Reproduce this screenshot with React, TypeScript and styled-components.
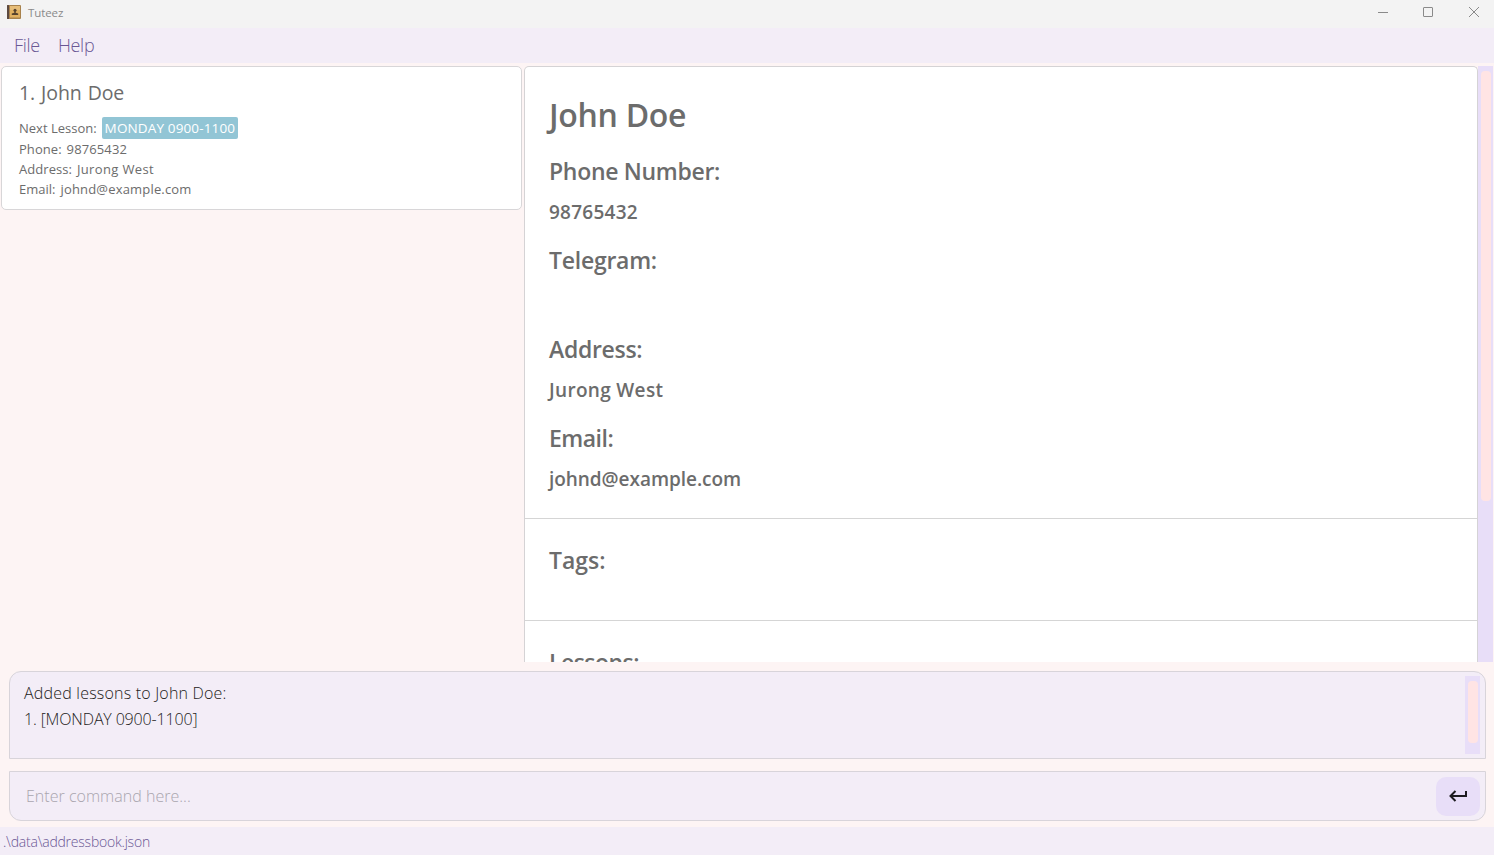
import React from "react";
import styled, { createGlobalStyle } from "styled-components";

const Global = createGlobalStyle`
  *, *::before, *::after { box-sizing: border-box; }
  html, body { margin: 0; height: 100%; overflow: hidden; }
  body { font-family: "Open Sans", "Noto Sans", sans-serif; }
`;

const Window = styled.div`
  width: 1494px;
  height: 855px;
  display: flex;
  flex-direction: column;
  background: #fdf4f4;
  overflow: hidden;
`;

const TitleBar = styled.header`
  height: 28px;
  flex: none;
  display: flex;
  align-items: flex-start;
  background: #f3f3f3;
  padding-left: 7px;
`;

const AppIcon = styled.svg`
  width: 14px;
  height: 14px;
  margin-top: 5px;
`;

const Text = styled.span<{ $size: number; $weight?: number; $track?: number; $color?: string; $line?: number }>`
  display: block;
  white-space: pre;
  font-size: ${(p) => p.$size}px;
  font-weight: ${(p) => p.$weight ?? 400};
  letter-spacing: ${(p) => p.$track ?? 0}px;
  color: ${(p) => p.$color ?? "#6c6c6c"};
  line-height: ${(p) => p.$line ?? 20}px;
`;

const WindowTitle = styled(Text)`
  margin-left: 7px;
  margin-top: 3px;
`;

const WindowControls = styled.div`
  margin-left: auto;
  display: flex;
  padding: 6px 14px 0 0;
`;

const ControlIcon = styled.svg`
  width: 12px;
  height: 12px;
  margin-left: 34px;
  fill: none;
  stroke: #8a8a8a;
  stroke-width: 1;

  &:nth-child(2) { margin-left: 33px; }
`;

const MenuBar = styled.nav`
  height: 35px;
  flex: none;
  display: flex;
  align-items: flex-start;
  gap: 18px;
  padding: 4px 14px 0;
  background: #f3edf7;
`;

const Main = styled.main`
  height: 599px;
  flex: none;
  display: flex;
  padding: 3px 1px 0;
`;

const ListPane = styled.section`
  width: 521px;
  flex: none;
`;

const PersonCard = styled.article`
  height: 144px;
  padding: 15px 17px 0;
  background: #fff;
  border: 1px solid #d8d6d8;
  border-radius: 5px;
`;

const CardName = styled(Text)`
  margin-bottom: 13px;
  word-spacing: 1px;
`;

const CardLine = styled.div<{ $height: number }>`
  height: ${(p) => p.$height}px;
  display: flex;
  align-items: center;
  gap: 5px;
`;

const LessonChip = styled.span`
  display: flex;
  align-items: center;
  width: 136px;
  height: 22px;
  padding-left: 3px;
  background: #92c5d5;
  border-radius: 2px;
`;

const DetailPane = styled.section`
  flex: 1;
  display: flex;
  margin-left: 2px;
  overflow: hidden;
`;

const DetailSheet = styled.div`
  width: 954px;
  flex: none;
  background: #fff;
  border: 1px solid #d5d3d5;
  border-bottom: 0;
  border-radius: 5px 5px 0 0;
`;

const DetailSection = styled.section<{ $height: number; $top: number }>`
  height: ${(p) => p.$height}px;
  padding: ${(p) => p.$top}px 24px 0;
  border-bottom: 1px solid #d5d5d5;
`;

const DetailName = styled(Text)`
  margin-bottom: 14px;
`;

const Field = styled.div`
  height: 89px;
`;

const ScrollTrack = styled.div<{ $height?: number }>`
  width: 15px;
  height: ${(p) => (p.$height ? p.$height + "px" : "100%")};
  padding: 5px 2px 0 3px;
  background: #e8def8;
`;

const ScrollThumb = styled.div<{ $height: number }>`
  height: ${(p) => p.$height}px;
  border-radius: 4px;
  background: #ffe4e4;
`;

const ResultBox = styled.section`
  height: 88px;
  flex: none;
  margin: 9px 8px 0 9px;
  display: flex;
  justify-content: space-between;
  padding: 4px 5px 0 14px;
  background: #f3edf7;
  border: 1px solid #d8d4da;
  border-radius: 12px 12px 0 0;
`;

const ResultText = styled.div`
  padding-top: 4px;
`;

const CommandBox = styled.section`
  height: 50px;
  flex: none;
  margin: 12px 8px 0 9px;
  display: flex;
  align-items: center;
  justify-content: space-between;
  padding: 0 5px 0 16px;
  background: #f3edf7;
  border: 1px solid #d8d4da;
  border-radius: 0 0 12px 12px;
`;

const EnterButton = styled.button`
  width: 44px;
  height: 39px;
  padding: 0;
  border: 0;
  border-radius: 10px;
  background: #e8def8;
`;

const EnterIcon = styled.svg`
  display: block;
  width: 44px;
  height: 39px;
  fill: none;
  stroke: #1d1b20;
  stroke-width: 2;
`;

const StatusBar = styled.footer`
  flex: 1;
  margin-top: 6px;
  padding: 4px 3px 0;
  background: #f3edf7;
`;

const MENU = "#6a5794";
const INK = "#1d1b20";

const cardLines = [
  { label: "Phone:", value: "98765432", labelTrack: 0.05, valueTrack: 0.12 },
  { label: "Address:", value: "Jurong West", labelTrack: 0.05, valueTrack: 0.35 },
  { label: "Email:", value: "johnd@example.com", labelTrack: 0, valueTrack: 0.18 },
];

const fields = [
  { label: "Phone Number:", value: "98765432", labelTrack: -0.3, valueTrack: 0.25 },
  { label: "Telegram:", value: "", labelTrack: -0.25, valueTrack: 0 },
  { label: "Address:", value: "Jurong West", labelTrack: -0.3, valueTrack: 0.32 },
  { label: "Email:", value: "johnd@example.com", labelTrack: -0.5, valueTrack: -0.05 },
];

export default function App() {
  return (
    <Window>
      <Global />
      <TitleBar>
        <AppIcon viewBox="0 0 14 14">
          <rect width="14" height="14" rx="1" fill="#a8824c" />
          <rect x="3" y="1" width="10" height="11.500" fill="#e0b060" />
          <rect x="3" y="1" width="10" height="4" fill="#e6bd78" />
          <rect width="2" height="14" rx=".5" fill="#5c4a40" />
          <circle cx="8" cy="5.200" r="1.500" fill="#57432d" />
          <path d="M7.300 6h1.400v1.800l2.500 .7v1.500H4.800V8.500l2.500-.7z" fill="#57432d" />
        </AppIcon>
        <WindowTitle $size={11.5} $track={-0.1} $color="#8a8a8a">Tuteez</WindowTitle>
        <WindowControls>
          <ControlIcon viewBox="0 0 12 12"><path d="M1 6.500h10" /></ControlIcon>
          <ControlIcon viewBox="0 0 12 12"><rect x="1.500" y="1.500" width="9" height="9" rx=".4" /></ControlIcon>
          <ControlIcon viewBox="0 0 12 12"><path d="M1 1l10 10M11 1L1 11" /></ControlIcon>
        </WindowControls>
      </TitleBar>
      <MenuBar>
        <Text $size={18} $weight={300} $track={-0.3} $color={MENU} $line={26}>File</Text>
        <Text $size={18} $weight={300} $track={-0.3} $color={MENU} $line={26}>Help</Text>
      </MenuBar>
      <Main>
        <ListPane>
          <PersonCard>
            <CardName $size={19.5} $track={-0.08} $line={22}>1. John Doe</CardName>
            <CardLine $height={22}>
              <Text $size={13}>Next Lesson:</Text>
              <LessonChip><Text $size={13.5} $track={0.14} $color="#fff">MONDAY 0900-1100</Text></LessonChip>
            </CardLine>
            {cardLines.map((l) => (
              <CardLine key={l.label} $height={20}>
                <Text $size={13} $track={l.labelTrack}>{l.label}</Text>
                <Text $size={13} $track={l.valueTrack}>{l.value}</Text>
              </CardLine>
            ))}
          </PersonCard>
        </ListPane>
        <DetailPane>
          <DetailSheet>
            <DetailSection $height={452} $top={27}>
              <DetailName $size={32} $weight={600} $line={42} $track={-0.28}>John Doe</DetailName>
              {fields.map((f) => (
                <Field key={f.label}>
                  <Text $size={23} $weight={600} $line={42} $track={f.labelTrack}>{f.label}</Text>
                  <Text $size={19} $weight={600} $line={40} $track={f.valueTrack}>{f.value}</Text>
                </Field>
              ))}
            </DetailSection>
            <DetailSection $height={102} $top={20}>
              <Text $size={23} $weight={600} $line={42} $track={0}>Tags:</Text>
            </DetailSection>
            <DetailSection $height={102} $top={20}>
              <Text $size={23} $weight={600} $line={42} $track={-0.55}>Lessons:</Text>
            </DetailSection>
          </DetailSheet>
          <ScrollTrack><ScrollThumb $height={430} /></ScrollTrack>
        </DetailPane>
      </Main>
      <ResultBox>
        <ResultText>
          <Text $size={16} $weight={300} $track={0.2} $color={INK} $line={26}>Added lessons to John Doe:</Text>
          <Text $size={16} $weight={300} $track={-0.15} $color={INK} $line={26}>1. [MONDAY 0900-1100]</Text>
        </ResultText>
        <ScrollTrack $height={78}><ScrollThumb $height={62} /></ScrollTrack>
      </ResultBox>
      <CommandBox>
        <Text $size={16} $weight={300} $track={0.02} $color="#a9a5ae" $line={26}>Enter command here...</Text>
        <EnterButton aria-label="Enter">
          <EnterIcon viewBox="0 0 44 39"><path d="M30 14v5H15M19.500 14l-5 5 5 5" /></EnterIcon>
        </EnterButton>
      </CommandBox>
      <StatusBar>
        <Text $size={14} $weight={300} $track={-0.22} $color={MENU} $line={22}>.\data\addressbook.json</Text>
      </StatusBar>
    </Window>
  );
}
